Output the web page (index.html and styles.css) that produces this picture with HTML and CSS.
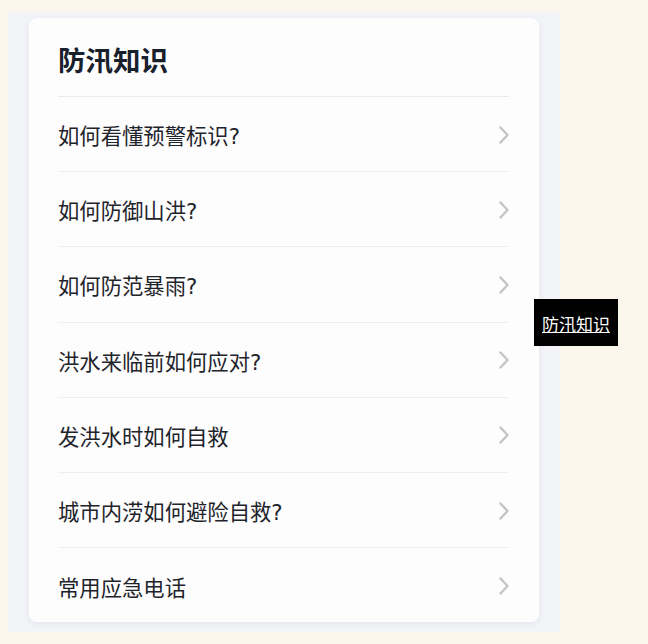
FILE: index.html
```html
<!DOCTYPE html>
<html lang="zh">
<head>
<meta charset="utf-8">
<link rel="stylesheet" href="styles.css">
</head>
<body>
<div class="panel">
  <div class="card">
    <h2 class="title">防汛知识</h2>
    <ul class="list">
      <li class="item"><span>如何看懂预警标识?</span><svg class="chev" viewBox="0 0 10 18"><path d="M1.5 1.5 L8.5 9 L1.5 16.5"/></svg></li>
      <li class="item"><span>如何防御山洪?</span><svg class="chev" viewBox="0 0 10 18"><path d="M1.5 1.5 L8.5 9 L1.5 16.5"/></svg></li>
      <li class="item"><span>如何防范暴雨?</span><svg class="chev" viewBox="0 0 10 18"><path d="M1.5 1.5 L8.5 9 L1.5 16.5"/></svg></li>
      <li class="item"><span>洪水来临前如何应对?</span><svg class="chev" viewBox="0 0 10 18"><path d="M1.5 1.5 L8.5 9 L1.5 16.5"/></svg></li>
      <li class="item"><span>发洪水时如何自救</span><svg class="chev" viewBox="0 0 10 18"><path d="M1.5 1.5 L8.5 9 L1.5 16.5"/></svg></li>
      <li class="item"><span>城市内涝如何避险自救?</span><svg class="chev" viewBox="0 0 10 18"><path d="M1.5 1.5 L8.5 9 L1.5 16.5"/></svg></li>
      <li class="item"><span>常用应急电话</span><svg class="chev" viewBox="0 0 10 18"><path d="M1.5 1.5 L8.5 9 L1.5 16.5"/></svg></li>
    </ul>
  </div>
</div>
<a class="tip" href="#">防汛知识</a>
</body>
</html>
```

FILE: styles.css
```css
html, body {
  margin: 0;
  padding: 0;
  background: #faf6eb;
  font-family: "Noto Sans CJK SC", "Noto Sans", sans-serif;
}
body {
  width: 648px;
  height: 644px;
  overflow: hidden;
  position: relative;
}
.panel {
  margin: 12px 0 0 8px;
  width: 552px;
  height: 620px;
  box-sizing: border-box;
  padding: 6px 21px 10px 21px;
  background: #f3f4f8;
}
.card {
  height: 604px;
  box-sizing: border-box;
  background: #fdfdfe;
  border-radius: 8px;
  box-shadow: 0 2px 6px rgba(200, 204, 214, 0.35);
  padding: 0 30px 0 29px;
}
.title {
  margin: 0;
  height: 79px;
  box-sizing: border-box;
  display: flex;
  align-items: center;
  padding-top: 3px;
  font-size: 27.5px;
  font-weight: 700;
  color: #18202b;
  border-bottom: 1px solid #e9eaec;
}
.list {
  list-style: none;
  margin: 0;
  padding: 0;
}
.item {
  height: 75.2px;
  box-sizing: border-box;
  display: flex;
  align-items: center;
  justify-content: space-between;
  font-family: "DejaVu Sans", "Noto Sans CJK SC", sans-serif;
  font-size: 21.33px;
  color: #1f242b;
  border-bottom: 1px solid #eeeff1;
  padding-top: 1px;
}
.item:last-child {
  border-bottom: none;
}
.chev {
  width: 10px;
  height: 18px;
  fill: none;
  stroke: #c4c4c6;
  stroke-width: 2.4;
  stroke-linecap: round;
  stroke-linejoin: round;
}
.tip {
  position: absolute;
  left: 534px;
  top: 299px;
  width: 84px;
  height: 47px;
  box-sizing: border-box;
  background: #000;
  color: #fff;
  font-size: 17px;
  display: flex;
  align-items: center;
  justify-content: center;
  text-decoration: underline;
  padding-top: 2px;
}
```
